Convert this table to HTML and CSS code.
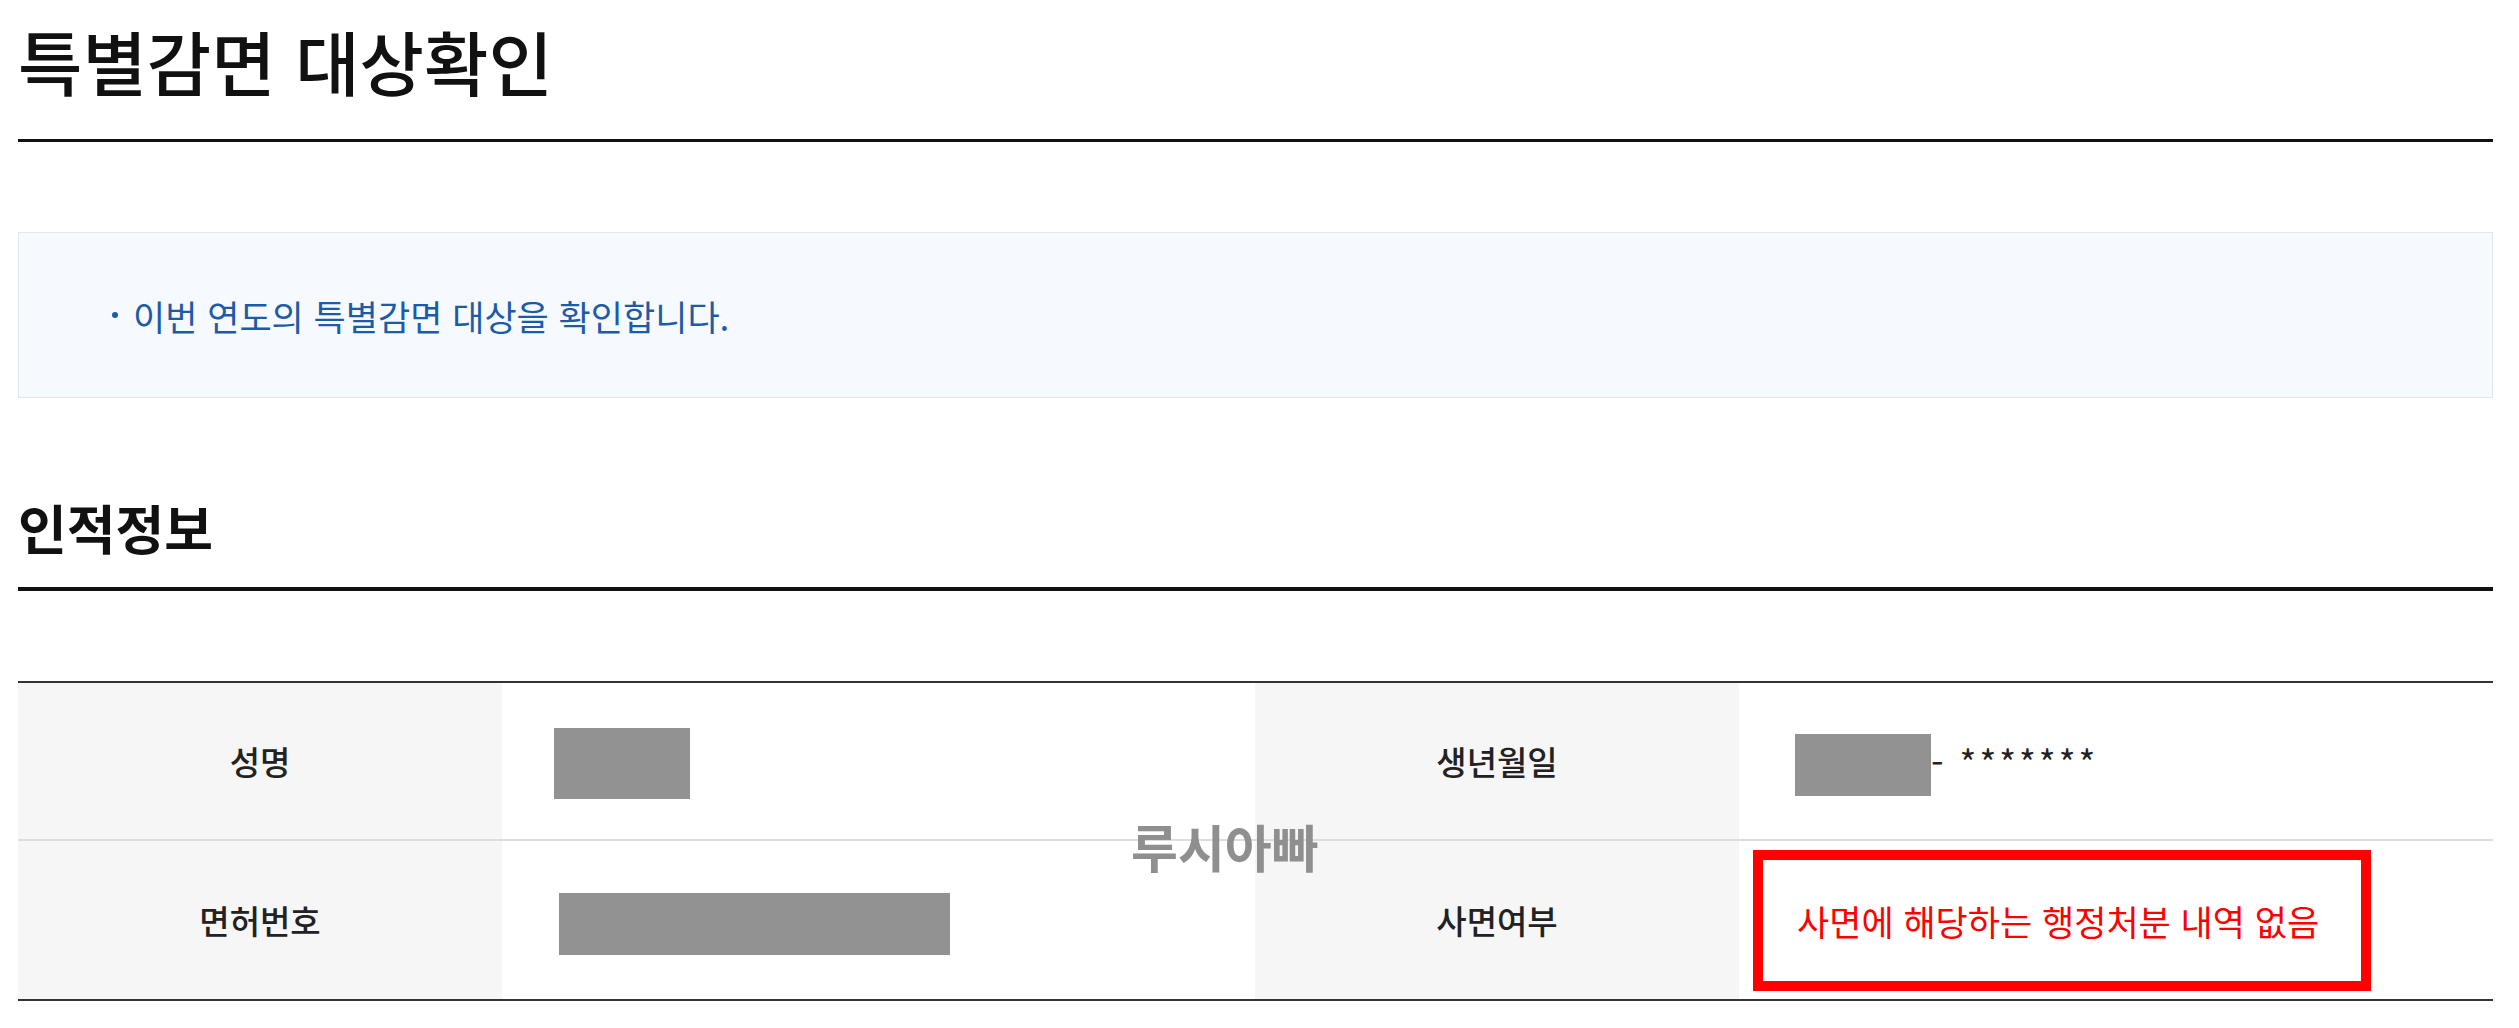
FILE: index.html
```html
<!DOCTYPE html>
<html lang="ko">
<head>
<meta charset="utf-8">
<title>특별감면 대상확인</title>
<link rel="stylesheet" href="styles.css">
</head>
<body>
<main class="page">
  <h1 class="page-title">특별감면 대상확인</h1>

  <div class="notice">
    <p class="notice-item">이번 연도의 특별감면 대상을 확인합니다.</p>
  </div>

  <h2 class="section-title">인적정보</h2>

  <div class="info-table">
    <div class="row row-first">
      <div class="th">성명</div>
      <div class="td td-left"><span class="mask mask-name"></span></div>
      <div class="th">생년월일</div>
      <div class="td td-right"><span class="mask mask-birth"></span><span class="birth-rest">- *******</span></div>
    </div>
    <div class="row">
      <div class="th">면허번호</div>
      <div class="td td-left"><span class="mask mask-license"></span></div>
      <div class="th">사면여부</div>
      <div class="td td-right td-result">
        <span class="result">사면에 해당하는 행정처분 내역 없음</span>
        <span class="highlight-box"></span>
      </div>
    </div>
    <div class="watermark">루시아빠</div>
  </div>
</main>
</body>
</html>
```

FILE: styles.css
```css
html, body {
  margin: 0;
  padding: 0;
  background: #ffffff;
}

body {
  font-family: "Noto Sans CJK KR", "Noto Sans", sans-serif;
  color: #222222;
}

.page {
  margin-left: 18px;
  width: 2475px;
}

.page-title {
  margin: 0;
  padding-top: 26px;
  padding-bottom: 43px;
  font-size: 70px;
  line-height: 70px;
  font-weight: 500;
  letter-spacing: 0;
  color: #111111;
  border-bottom: 3px solid #111111;
}

.notice {
  margin-top: 90px;
  height: 166px;
  box-sizing: border-box;
  border: 1px solid #e3e6ea;
  background: #f6f9fd;
  display: flex;
  align-items: center;
  padding-left: 93px;
}

.notice-item {
  margin: 0;
  display: flex;
  align-items: center;
  gap: 15px;
  font-size: 35px;
  line-height: 1;
  color: #1d5ba6;
}

.notice-item::before {
  content: "";
  width: 6px;
  height: 6px;
  border-radius: 50%;
  background: #1d5ba6;
}

.section-title {
  margin: 103px 0 0;
  padding-bottom: 33px;
  font-size: 53px;
  line-height: 53px;
  font-weight: 700;
  color: #111111;
  border-bottom: 4px solid #111111;
}

.info-table {
  position: relative;
  margin-top: 90px;
  border-top: 2px solid #333333;
  border-bottom: 2px solid #333333;
}

.row {
  display: grid;
  grid-template-columns: 484px 753px 484px 1fr;
  height: 158px;
}

.row-first {
  height: 156px;
  border-bottom: 2px solid #dddddd;
}

.th {
  background: #f6f6f6;
  display: flex;
  align-items: center;
  justify-content: center;
  font-size: 33px;
  line-height: 1;
  font-weight: 500;
  color: #222222;
}

.td {
  display: flex;
  align-items: center;
  background: #ffffff;
}

.td-left {
  padding-left: 52px;
}

.td-right {
  padding-left: 56px;
}

.mask {
  display: block;
  background: #929292;
}

.mask-name {
  width: 136px;
  height: 71px;
  margin-top: 5px;
}

.mask-license {
  width: 391px;
  height: 62px;
  margin-left: 5px;
  margin-top: 8px;
}

.mask-birth {
  width: 136px;
  height: 62px;
  margin-top: 8px;
}

.birth-rest {
  font-size: 36px;
  line-height: 1;
  letter-spacing: 3px;
  color: #222222;
}

.td-result {
  position: relative;
  padding-left: 58px;
}

.result {
  font-size: 35px;
  line-height: 1;
  color: #ff0000;
}

.highlight-box {
  position: absolute;
  left: 14px;
  top: 9px;
  width: 618px;
  height: 141px;
  box-sizing: border-box;
  border: 10px solid #ff0000;
}

.watermark {
  position: absolute;
  left: 1113px;
  top: 138px;
  font-size: 51px;
  line-height: 1;
  font-weight: 700;
  color: #8f8f8f;
}
```
